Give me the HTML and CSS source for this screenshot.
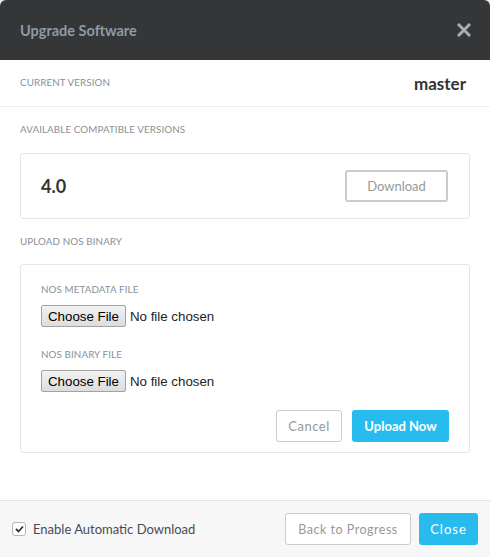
FILE: index.html
```html
<!DOCTYPE html>
<html lang="en">
<head>
  <meta charset="UTF-8">
  <title>Upgrade Software</title>
  <meta name="viewport" content="width=device-width, initial-scale=1.0">
  <link rel="stylesheet" href="styles.css">
</head>
<body>
  <div class="modal">
    <div class="modal-header">
      <h2>Upgrade Software</h2>
      <button class="close-x" aria-label="Close">
        <svg width="14" height="14" viewBox="0 0 14 14">
          <path d="M2 2 L12 12 M12 2 L2 12" stroke="#a3b0ba" stroke-width="3" stroke-linecap="square" fill="none"/>
        </svg>
      </button>
    </div>

    <div class="current-row">
      <span class="label">Current Version</span>
      <span class="current">master</span>
    </div>

    <div class="modal-body">
      <p class="label section">Available Compatible Versions</p>
      <div class="panel version-panel">
        <span class="version">4.0</span>
        <button class="btn btn-outline">Download</button>
      </div>

      <p class="label section second">Upload NOS Binary</p>
      <div class="panel upload-panel">
        <label class="label" for="meta">NOS Metadata File</label>
        <input type="file" id="meta" class="file">

        <label class="label" for="bin">NOS Binary File</label>
        <input type="file" id="bin" class="file">

        <div class="actions">
          <button class="btn btn-light">Cancel</button>
          <button class="btn btn-primary">Upload Now</button>
        </div>
      </div>
    </div>

    <div class="modal-footer">
      <label class="auto">
        <span class="check">
          <svg width="9" height="8" viewBox="0 0 9 8">
            <path d="M1 4 L3.5 6.5 L8 1.5" stroke="#333" stroke-width="1.8" fill="none"/>
          </svg>
        </span>
        Enable Automatic Download
      </label>
      <div class="footer-btns">
        <button class="btn btn-light wide">Back to Progress</button>
        <button class="btn btn-primary plain">Close</button>
      </div>
    </div>
  </div>
</body>
</html>
```

FILE: styles.css
```css
* {
  box-sizing: border-box;
}
body {
  margin: 0;
  background: #e9e9e9;
  font-family: Lato, "Open Sans", sans-serif;
}
.modal {
  height: 100vh;
  background: white;
  border-radius: 6px 6px 0 0;
  overflow: hidden;
  display: flex;
  flex-direction: column;
}
.modal-header {
  height: 60px;
  background: #353638;
  padding: 0 20px;
  display: flex;
  align-items: center;
  justify-content: space-between;
}
.modal-header h2 {
  margin: 0;
  font-size: 14.5px;
  font-weight: bold;
  color: #8d9ba6;
}
.close-x {
  background: none;
  border: none;
  padding: 0;
  margin-right: -1px;
  display: flex;
}
.label {
  display: block;
  font-size: 9.8px;
  line-height: 12px;
  text-transform: uppercase;
  color: #8a9099;
  letter-spacing: 0.1px;
}
.current-row {
  height: 47px;
  padding: 0 24px 0 20px;
  border-bottom: 1px solid #eeeeee;
  display: flex;
  align-items: center;
  justify-content: space-between;
}
.current-row .label {
  margin-top: -2px;
}
.current {
  font-size: 17px;
  font-weight: bold;
  color: #333;
}
.modal-body {
  padding: 0 20px;
}
.section {
  margin: 16px 0 18px;
}
.section.second {
  margin: 16px 0 17px;
}
.panel {
  border: 1px solid #e6e6e6;
  border-radius: 3px;
}
.version-panel {
  padding: 16px 21px 16px 20px;
  display: flex;
  align-items: center;
  justify-content: space-between;
}
.version {
  font-size: 18px;
  font-weight: bold;
  color: #333;
}
.btn {
  height: 32px;
  border-radius: 3px;
  font-family: Lato, "Open Sans", sans-serif;
  font-size: 13px;
  cursor: pointer;
}
.btn-outline {
  width: 103px;
  background: white;
  border: 2px solid #cccccc;
  color: #999;
}
.btn-light {
  width: 66px;
  background: white;
  border: 1px solid #cccccc;
  color: #999;
  letter-spacing: 0.5px;
}
.btn-primary {
  width: 97px;
  background: #28bcee;
  border: none;
  color: white;
  font-weight: bold;
}
.upload-panel {
  padding: 18px 20px 10px;
}
.upload-panel .label {
  margin-bottom: 10px;
}
.file {
  display: block;
  height: 22px;
  font-family: "Liberation Sans", Arial, sans-serif;
  font-size: 13.3px;
  color: #222;
  margin-bottom: 21px;
}
.file::file-selector-button {
  height: 22px;
  padding: 0 6px;
  margin-right: 4px;
  font-family: "Liberation Sans", Arial, sans-serif;
  font-size: 13.3px;
  color: #000;
  background: linear-gradient(#f2f2f2, #dddddd);
  border: 1px solid #a3a3a3;
  border-radius: 2px;
}
.actions {
  margin-top: -3px;
  display: flex;
  justify-content: flex-end;
  gap: 10px;
}
.modal-footer {
  margin-top: auto;
  height: 57px;
  background: #f7f7f7;
  border-top: 1px solid #e4e4e4;
  padding: 0 12px;
  display: flex;
  align-items: center;
  justify-content: space-between;
}
.auto {
  display: flex;
  align-items: center;
  font-size: 13px;
  color: #4a4a55;
}
.check {
  width: 14px;
  height: 14px;
  margin-right: 7px;
  border: 1px solid #b5b5b5;
  border-radius: 3px;
  background: white;
  display: flex;
  align-items: center;
  justify-content: center;
}
.footer-btns {
  display: flex;
  gap: 8px;
}
.wide {
  width: 126px;
  font-size: 12.5px;
}
.plain {
  width: 59px;
  font-weight: normal;
  letter-spacing: 1px;
}
```
